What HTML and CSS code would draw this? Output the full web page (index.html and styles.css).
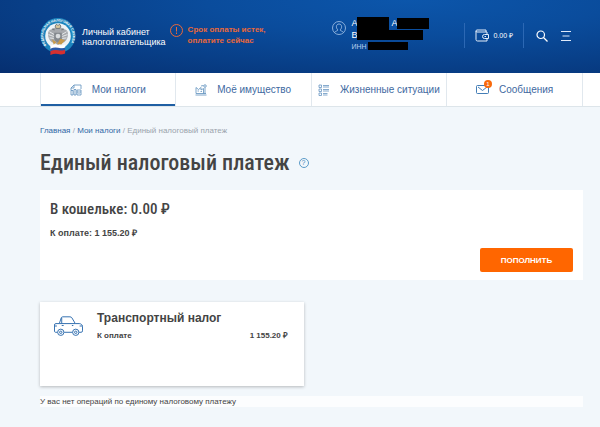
FILE: index.html
```html
<!DOCTYPE html>
<html lang="ru">
<head>
    <meta charset="UTF-8">
    <meta name="viewport" content="width=device-width, initial-scale=1.0">
    <title>Единый налоговый платеж</title>
    <link rel="stylesheet" href="styles.css">
</head>
<body>
    <header class="header">
        <a class="brand" href="#">
            <svg class="logo" viewBox="0 0 76 80" aria-hidden="true">
                <defs>
                    <path id="ring" d="M14 59 A31 31 0 1 1 63 57"/>
                </defs>
                <circle cx="38" cy="38" r="37" fill="#1d84bd"/>
                <circle cx="38" cy="39" r="27" fill="#eef3f6"/>
                <text class="ring-text"><textPath href="#ring">ФЕДЕРАЛЬНАЯ НАЛОГОВАЯ СЛУЖБА</textPath></text>
                <path d="M36 24c-5-5-10-2-12 1-4 0-7 4-7 9 0 7 2 14 8 18l7 2 6 4 6-4 7-2c6-4 8-11 8-18 0-5-3-9-7-9-2-3-7-6-12-1l-2-3z" fill="#a6a9ad"/>
                <path d="M20 30l10 6M18 36l11 4M20 43l9 1M56 30l-10 6M58 36l-11 4M56 43l-9 1" stroke="#e9ecee" stroke-width="2"/>
                <path d="M32 18l3-4 3 3 3-3 3 4-2 5h-8zM26 25l5 1M50 25l-5 1" stroke="#6f7377" stroke-width="2" fill="#d8c79b"/>
                <path d="M30 32h16v12c0 6-8 9-8 9s-8-3-8-9z" fill="#83888d"/>
                <circle cx="38" cy="39" r="5" fill="#d9dcde"/>
                <path d="M25 46l10 6-6 5zM43 45l10 3-8 9-9-1z" fill="#c79a4b"/>
                <path d="M22 60q8-4 16-2t15-1v7q-8 3-15 1t-16 2z" fill="#fff"/>
                <path d="M22 66q8-4 16-2t15-1v6q-8 3-15 1t-16 2z" fill="#2858a8"/>
                <path d="M22 71q8-4 16-2t15-1v8q-8 3-15 1t-16 2z" fill="#d6302f"/>
            </svg>
            <span class="brand-name">Личный кабинет<br>налогоплательщика</span>
        </a>

        <a class="alert" href="#">
            <svg class="icon-13" viewBox="0 0 26 26" fill="none" stroke="#e9683a" stroke-width="2">
                <circle cx="13" cy="13" r="12"/>
                <path d="M13 6v9M13 17v3"/>
            </svg>
            <span>Срок оплаты истек,<br>оплатите сейчас</span>
        </a>

        <div class="user">
            <svg class="user-icon" viewBox="0 0 28 28" fill="none" stroke="#a9c6ea" stroke-width="1.6">
                <circle cx="14" cy="14" r="13"/>
                <path d="M5 23c2-3 6-3 7-5-5-4-4-12 2-12s7 8 2 12c1 2 5 2 7 5"/>
            </svg>
            <div class="user-info">
                <div class="user-line">А<span class="mask mask-first"></span>А<span class="mask mask-second"></span></div>
                <div class="user-line">В<span class="mask mask-last"></span></div>
                <div class="user-inn">ИНН<span class="mask mask-inn"></span></div>
            </div>
        </div>

        <div class="tools">
            <a class="wallet" href="#">
                <svg class="wallet-icon" viewBox="0 0 28 26" fill="none" stroke="#e4eefa" stroke-width="2">
                    <path d="M24 11V6H4a2 2 0 0 1 0-4h18v4M2 4v17a3 3 0 0 0 3 3h19v-5"/>
                    <path d="M27 11h-8a4 4 0 0 0 0 8h8z"/>
                    <path d="M19 15h3"/>
                </svg>
                0.00 ₽
            </a>
            <button class="tool-btn" type="button" aria-label="Поиск">
                <svg class="icon-12" viewBox="0 0 24 24" fill="none" stroke="#fff" stroke-width="2.4">
                    <circle cx="9.500" cy="9.500" r="7.500"/>
                    <path d="M15 15l8 8"/>
                </svg>
            </button>
            <button class="tool-btn" type="button" aria-label="Меню">
                <svg class="icon-12" viewBox="0 0 24 24" fill="none" stroke="#dfeafa" stroke-width="2">
                    <path d="M2 3h20M5 12h14M2 21h20"/>
                </svg>
            </button>
        </div>
    </header>

    <nav class="tabs">
        <a class="tab tab-active" href="#">
            <svg class="icon-12" viewBox="0 0 24 24" fill="none" stroke="#5d8fbd" stroke-width="1.6">
                <path d="M2 13V8l6-6h14v8M8 2v6H2M2 13h4v9H2zM8 11h4v11H8z"/>
                <path d="M14 12h8v10h-8zM14 16h8M17 19h2"/>
            </svg>
            Мои налоги
        </a>
        <a class="tab" href="#">
            <svg class="icon-12" viewBox="0 0 24 24" fill="none" stroke="#5d8fbd" stroke-width="1.6">
                <path d="M2 19V7l5 4 5-4v5l5-3v10M1 22h22M2 19h20M5 14h3M11 15h3"/>
                <circle cx="20" cy="4" r="2.500"/>
                <path d="M20 7v12M12 4l5-1"/>
            </svg>
            Моё имущество
        </a>
        <a class="tab" href="#">
            <svg class="icon-12" viewBox="0 0 24 24" fill="none" stroke="#5d8fbd" stroke-width="1.500">
                <path d="M2 2h5v5H2zM2 10h5v5H2zM2 18h5v5H2zM10 3h12M10 6h12M10 11h12M10 14h12M10 19h9M10 22h9"/>
            </svg>
            Жизненные ситуации
        </a>
        <a class="tab" href="#">
            <span class="mail">
                <svg class="mail-icon" viewBox="0 0 26 18" fill="none" stroke="#2f6fae" stroke-width="1.800">
                    <rect x="1" y="1" width="24" height="16" rx="2"/>
                    <path d="M4 4l9 7 9-7"/>
                </svg>
                <span class="badge">1</span>
            </span>
            Сообщения
        </a>
    </nav>

    <main class="content">
        <div class="breadcrumbs">
            <a href="#">Главная</a> / <a href="#">Мои налоги</a> / <span>Единый налоговый платеж</span>
        </div>

        <div class="title-row">
            <h1>Единый налоговый платеж</h1>
            <button class="help" type="button" aria-label="Справка">?</button>
        </div>

        <section class="purse">
            <h2>В кошельке: 0.00 ₽</h2>
            <p class="due">К оплате: 1 155.20 ₽</p>
            <button class="pay-btn" type="button">ПОПОЛНИТЬ</button>
        </section>

        <section class="tax-card">
            <svg class="car" viewBox="0 0 60 40" fill="none" stroke="#2f6dae" stroke-width="2">
                <path d="M7 33H3c-1 0-2-1-2-2V18c0-2 1-3 3-3h7l4-12c0-1 2-2 3-2h15c2 0 3 1 4 2l7 12h8c4 0 7 3 7 6v9c0 2-1 3-3 3h-4M21 33h17"/>
                <path d="M11 15h33M16 15V3M16 19h4M37 19h3M1 20h5M53 20h6"/>
                <circle cx="14" cy="33" r="6.500"/>
                <circle cx="14" cy="33" r="2.500"/>
                <circle cx="45" cy="33" r="6.500"/>
                <circle cx="45" cy="33" r="2.500"/>
            </svg>
            <div class="tax-info">
                <h3>Транспортный налог</h3>
                <div class="tax-row">
                    <span>К оплате</span>
                    <span>1 155.20 ₽</span>
                </div>
            </div>
        </section>

        <p class="empty">У вас нет операций по единому налоговому платежу</p>
    </main>
</body>
</html>
```
FILE: styles.css
```css
* {
    box-sizing: border-box;
}
body {
    margin: 0;
    font-family: "Liberation Sans", Arial, sans-serif;
    font-size: 9px;
    color: #444;
    background-color: #f2f7fb;
}
a {
    text-decoration: none;
}
button {
    font-family: inherit;
    border: none;
    padding: 0;
    cursor: pointer;
}
svg {
    display: block;
    flex-shrink: 0;
}
h1, h2, h3, p {
    margin: 0;
}
.icon-12 {
    width: 12px;
    height: 12px;
}
.icon-13 {
    width: 13px;
    height: 13px;
}

/* header */
.header {
    display: flex;
    align-items: flex-start;
    padding: 17px 28px 17px 40px;
    color: #fff;
    background: radial-gradient(ellipse at 68% 0, #0c56ab 0%, #0a4c9c 35%, #083f88 65%, #062f70 100%);
}
.brand {
    display: flex;
    align-items: center;
    gap: 6px;
    color: #fff;
    line-height: 10px;
}
.logo {
    width: 36px;
    height: 39px;
}
.ring-text {
    font-size: 7px;
    font-weight: bold;
    fill: #fff;
}
.alert {
    display: flex;
    gap: 5px;
    margin: 7px 0 0 4px;
    font-size: 8px;
    font-weight: bold;
    line-height: 11px;
    color: #e9683a;
}
.user {
    display: flex;
    gap: 5px;
    margin-left: auto;
}
.user-icon {
    width: 14px;
    height: 14px;
    margin-top: 4px;
}
.user-line {
    display: flex;
    align-items: center;
    height: 12px;
}
.user-inn {
    display: flex;
    align-items: center;
    height: 10px;
    font-size: 7px;
    color: #b9d0ee;
}
.mask {
    background-color: #000;
}
.mask-first {
    width: 32px;
    height: 13px;
    margin-right: 2px;
}
.mask-second {
    width: 32px;
    height: 11px;
}
.mask-last {
    width: 66px;
    height: 10px;
}
.mask-inn {
    width: 40px;
    height: 8px;
    margin-left: 1px;
}
.tools {
    display: flex;
    align-items: center;
    gap: 12px;
    height: 25px;
    margin: 6px 0 0 35px;
}
.wallet {
    display: flex;
    align-items: center;
    gap: 4px;
    height: 25px;
    padding: 0 10px;
    border: solid #2c68b4;
    border-width: 0 1px;
    font-size: 7px;
    color: #fff;
}
.wallet-icon {
    width: 14px;
    height: 13px;
}
.tool-btn {
    background: none;
}

/* tabs */
.tabs {
    display: grid;
    grid-template-columns: repeat(4, 1fr);
    padding: 0 17px 0 40px;
    background-color: #fff;
    border-bottom: 1px solid #dde5ea;
}
.tab {
    display: flex;
    align-items: center;
    justify-content: center;
    gap: 10px;
    height: 33px;
    border-right: 1px solid #e1e8ee;
    font-size: 10px;
    color: #41699f;
}
.tab-active {
    border-left: 1px solid #e1e8ee;
    box-shadow: inset 0 -2px #1f5fa3;
}
.mail {
    position: relative;
}
.mail-icon {
    width: 13px;
    height: 9px;
}
.badge {
    position: absolute;
    top: -5px;
    right: -3px;
    width: 8px;
    height: 8px;
    border-radius: 50%;
    background-color: #f96a0c;
    color: #fff;
    font-size: 6px;
    line-height: 8px;
    text-align: center;
}

/* content */
.content {
    padding: 18px 17px 20px 40px;
}
.breadcrumbs {
    font-size: 8px;
    line-height: 12px;
    color: #9aa3ab;
}
.breadcrumbs a {
    color: #2f66a5;
}
.title-row {
    display: flex;
    align-items: center;
    gap: 9px;
    margin: 10px 0 11px;
}
h1, h2 {
    font-family: "Roboto Condensed", "Liberation Sans Narrow", "Liberation Sans", sans-serif;
    font-weight: 500;
}
h1 {
    font-size: 22px;
    line-height: 32px;
}
.help {
    width: 10px;
    height: 10px;
    border: 1px solid #5b9bc8;
    border-radius: 50%;
    background: none;
    color: #3f86ba;
    font-size: 7px;
    line-height: 8px;
}
.purse {
    display: flex;
    flex-direction: column;
    padding: 9px 10px 8px;
    background-color: #fff;
}
h2 {
    font-size: 15px;
    line-height: 20px;
}
.due {
    margin-top: 8px;
    font-weight: bold;
    line-height: 12px;
}
.pay-btn {
    align-self: flex-end;
    width: 93px;
    height: 24px;
    margin-top: 9px;
    border-radius: 2px;
    background-color: #ff6600;
    color: #fff;
    font-size: 8px;
    font-weight: bold;
}
.tax-card {
    display: flex;
    gap: 14px;
    width: 50%;
    max-width: 264px;
    min-height: 84px;
    margin-top: 22px;
    padding: 9px 16px 9px 14px;
    background-color: #fff;
    box-shadow: 0 1px 3px rgba(0, 0, 0, 0.25);
}
.car {
    width: 29px;
    height: 20px;
    margin-top: 5px;
}
.tax-info {
    flex: 1;
}
h3 {
    font-size: 12px;
    line-height: 14px;
}
.tax-row {
    display: flex;
    justify-content: space-between;
    margin-top: 5px;
    font-size: 8px;
    font-weight: bold;
    line-height: 11px;
}
.empty {
    margin-top: 10px;
    background-color: #fcfdfe;
    font-size: 8px;
    line-height: 11px;
}
```
